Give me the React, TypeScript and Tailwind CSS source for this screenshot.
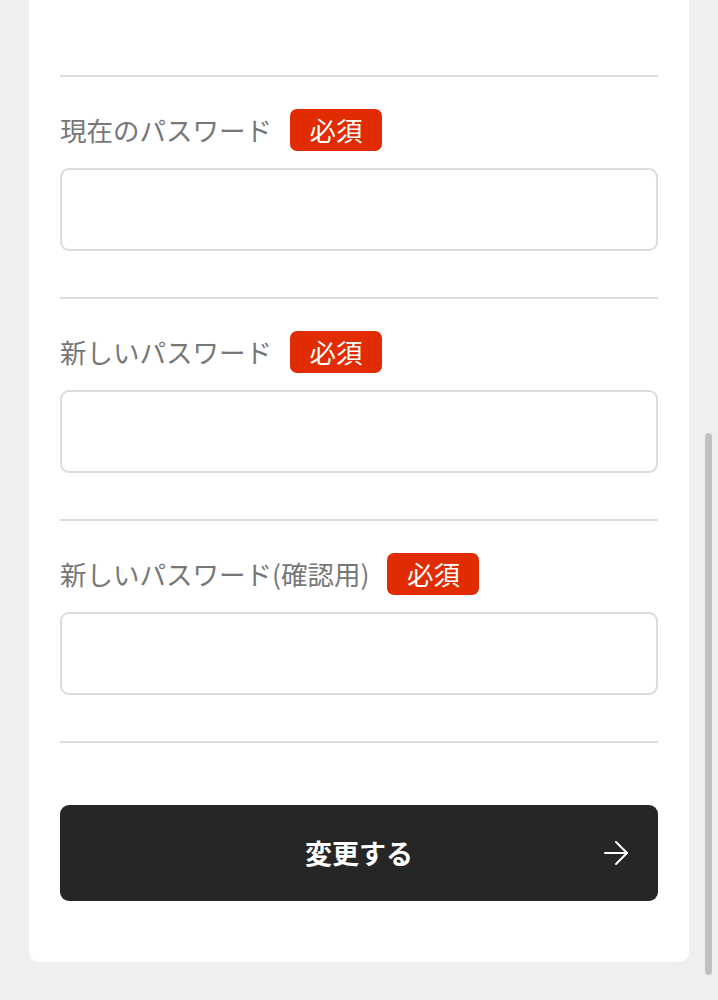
import React from "react";

const font = { fontFamily: '"Noto Sans CJK JP", "Noto Sans", sans-serif' };

function Field({ label }: { label: string }) {
  return (
    <div>
      <div className="h-[2px] bg-[#dedede]" />
      <div className="pt-[32px] pb-[46px]">
        <div className="flex items-center h-[42px]">
          <span className="text-[26.5px] leading-none text-[#777777]">{label}</span>
          <span className="ml-[18px] h-[42px] px-[19.5px] flex items-center rounded-[7px] bg-[#e02c00] text-white text-[26.5px] leading-none">
            必須
          </span>
        </div>
        <div className="mt-[17px] h-[83px] rounded-[9px] border-2 border-[#dcdcdc] bg-white" />
      </div>
    </div>
  );
}

export default function App() {
  return (
    <div className="relative min-h-screen bg-[#efefef] overflow-hidden" style={font}>
      <div className="ml-[29px] w-[660px] bg-white rounded-b-[10px] px-[31px] pt-[75px] pb-[61px]">
        <Field label="現在のパスワード" />
        <Field label="新しいパスワード" />
        <Field label="新しいパスワード(確認用)" />
        <div className="h-[2px] bg-[#dedede]" />
        <button className="mt-[62px] relative w-full h-[96px] rounded-[9px] bg-[#262626] flex items-center justify-center">
          <span className="text-white text-[27px] font-bold">変更する</span>
          <svg
            className="absolute right-[29px] top-1/2 -translate-y-1/2"
            width="26"
            height="26"
            viewBox="0 0 26 26"
            fill="none"
            stroke="white"
            strokeWidth="2"
            strokeLinecap="round"
            strokeLinejoin="round"
          >
            <path d="M2 13H24" />
            <path d="M13 2L24 13L13 24" />
          </svg>
        </button>
      </div>
      <div className="absolute left-[705px] top-[433px] w-[7px] h-[542px] rounded-full bg-[#c1c1c1]" />
    </div>
  );
}
